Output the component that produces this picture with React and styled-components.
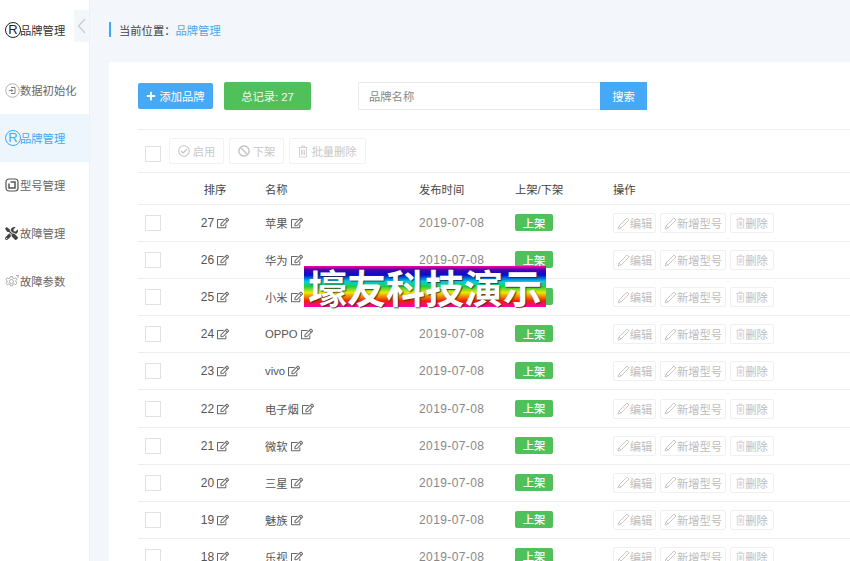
import React from "react";
import styled, { createGlobalStyle } from "styled-components";
import { FaPlus, FaRegEdit, FaRegCheckCircle, FaBan, FaTools } from "react-icons/fa";

const Global = createGlobalStyle`
  html, body { margin: 0; padding: 0; height: 561px; overflow: hidden; background: #f3f6fa; }
  * { box-sizing: border-box; }
  body { font-family: "Liberation Sans", "Noto Sans CJK SC", sans-serif; color: #555; font-size: 11.3px; }
`;

const Page = styled.div`
  display: flex; width: 850px; height: 561px; overflow: hidden; position: relative;
`;
const Sidebar = styled.aside`
  width: 90px; flex: none; background: #fff; border-right: 1px solid #eef0f3; display: flex; flex-direction: column;
`;
const Brand = styled.div`
  height: 66.5px; flex: none; display: flex; align-items: flex-start; justify-content: space-between; padding: 10px 0 0 5px; color: #333;
`;
const BrandName = styled.div`
  display: flex; align-items: center; height: 32px; padding-top: 7px;
`;
const Collapse = styled.div`
  width: 15px; height: 32px; background: #f3f6fa; display: flex; align-items: center; justify-content: center;
`;
const MenuItem = styled.div`
  height: 47.6px; flex: none; display: flex; align-items: center; padding-left: 5px;
  background: ${p => (p.$active ? "#eef6fd" : "transparent")};
  color: ${p => (p.$active ? "#3fa9f5" : "#666")};
`;
const IconSlot = styled.span`
  width: 15px; height: 16px; flex: none; display: flex; align-items: center; justify-content: flex-start;
  color: ${p => p.$color || "inherit"};
`;
const RMark = styled.span`
  width: 16px; height: 16px; flex: none; border: 1.4px solid currentColor; border-radius: 50%; display: flex; align-items: center; justify-content: center;
  font-size: 13px; line-height: 1;
`;
const Main = styled.main`
  flex: 1; min-width: 0; display: flex; flex-direction: column; padding-left: 19px;
`;
const Crumb = styled.div`
  height: 62px; flex: none; display: flex; align-items: center; padding-bottom: 3px; color: #444;
`;
const CrumbBar = styled.span`
  width: 2px; height: 15px; background: #3fa9f5; margin-right: 8px;
`;
const CrumbLink = styled.span`
  color: #4fa8ec;
`;
const Card = styled.section`
  flex: 1; background: #fff; padding: 20px 0 0 29px; min-width: 0;
`;
const Toolbar = styled.div`
  display: flex; align-items: center; height: 28px;
`;
const AddButton = styled.div`
  width: 75px; height: 26px; background: #46a9f5; color: #fff; border-radius: 2px; display: flex; align-items: center; justify-content: center; gap: 3px;
`;
const TotalBadge = styled.div`
  width: 87px; height: 28px; margin-left: 11px; background: #4fc05a; color: #f2fbf3; border-radius: 2px; display: flex; align-items: center; justify-content: center;
`;
const Search = styled.div`
  margin-left: 47px; display: flex; height: 28px;
`;
const SearchInput = styled.div`
  width: 242px; border: 1px solid #eaeaea; border-right: 0; padding-left: 10px; color: #888; display: flex; align-items: center;
`;
const SearchButton = styled.div`
  width: 47px; background: #46a9f5; color: #fff; display: flex; align-items: center; justify-content: center;
`;
const Actions = styled.div`
  margin-top: 19px; height: 44px; border-top: 1px solid #eee; border-bottom: 1px solid #eee; display: flex; align-items: flex-start; padding: 8px 0 0 7px;
`;
const Check = styled.span`
  width: 16px; height: 16px; border: 1px solid #e2e2e2; display: block; flex: none;
`;
const ActionCheck = styled(Check)`
  margin: 8px 8px 0 0;
`;
const GhostAction = styled.div`
  height: 26px; width: ${p => p.$w}px; margin-right: 5px; border: 1px solid #f2f2f2; border-radius: 2px; color: #c8c8c8;
  display: flex; align-items: center; justify-content: center; gap: 3px;
`;
const Row = styled.div`
  display: grid; grid-template-columns: 47px 60px 174px 96px 98px 1fr; align-items: center;
  height: ${p => (p.$head ? "32px" : "37.1px")};
  border-bottom: 1px solid #eee;
  color: ${p => (p.$head ? "#444" : "#555")};
`;
const CheckCell = styled.div`
  padding-left: 7px;
`;
const SortCell = styled.div`
  display: flex; align-items: center; justify-content: center; gap: 3px;
`;
const SortNumber = styled.span`
  font-size: 12px;
`;
const NameCell = styled.div`
  padding-left: 20px; display: flex; align-items: center; gap: 3px;
`;
const DateCell = styled.div`
  color: #888; font-size: 12px; letter-spacing: 0.4px;
`;
const EditIcon = styled(FaRegEdit)`
  color: #666; font-size: 12px; flex: none;
`;
const Tag = styled.span`
  width: 38px; height: 17px; margin-top: -1px; background: #4fc05a; color: #fff; border-radius: 2px; font-weight: 500; display: flex; align-items: center; justify-content: center;
`;
const Ops = styled.div`
  display: flex; gap: 4px; width: 200px;
`;
const OpButton = styled.div`
  height: 20px; width: ${p => p.$w}px; border: 1px solid #f0f0f0; border-radius: 2px; color: #bdbdbd; display: flex; align-items: center; justify-content: center; gap: 0; flex: none;
`;
const Watermark = styled.div`
  position: absolute; left: 304px; top: 266px; width: 242px; height: 41px;
  background: linear-gradient(180deg, #ff00a0 0%, #5000b0 9%, #0010d0 22%, #00d0e0 38%, #20d040 50%, #f0e800 65%, #f02000 85%, #ff00b0 100%);
  color: #fff; font-family: "Noto Sans CJK SC", sans-serif; font-weight: 700; font-size: 39px; line-height: 40px; text-align: center; white-space: nowrap;
  text-shadow: 1px 1px 1px rgba(40,40,40,.8);
`;

const rows = [
  [27, "苹果"], [26, "华为"], [25, "小米"], [24, "OPPO"], [23, "vivo"],
  [22, "电子烟"], [21, "微软"], [20, "三星"], [19, "魅族"], [18, "乐视"],
];

const InitIcon = () => (
  <svg width="15" height="15" viewBox="0 0 15 15" fill="none" stroke="currentColor" strokeWidth="0.9">
    <circle cx="7.5" cy="7.5" r="6.8" stroke="#aaa" />
    <path d="M6 4.500h4v6H6M3.800 7.500h4M6.300 6l1.500 1.500L6.300 9" stroke="#777" />
  </svg>
);
const ModelIcon = () => (
  <svg width="14" height="14" viewBox="0 0 14 14" fill="none" stroke="#555" strokeWidth="1.2">
    <rect x="1" y="1" width="12" height="12" rx="3" />
    <path d="M4 5.500V10h6V4H5.500" strokeWidth="1.500" />
  </svg>
);
const GearIcon = () => (
  <svg width="15" height="14" viewBox="0 0 15 14" fill="none" stroke="#999" strokeWidth="0.8">
    <circle cx="6.500" cy="7.500" r="2" />
    <path d="M5.500 2.500h2l.4 1.500 1.400.6 1.400-.8 1.200 1.500-1 1.200v1.400l1 1.200-1.200 1.500-1.400-.8-1.400.6-.4 1.500h-2l-.4-1.500-1.400-.6-1.400.8L1 9.500l1-1.200V6.900L1 5.300l1.200-1.500 1.400.8 1.400-.6z" />
    <path d="M11 1.500h3M12 3h2" />
  </svg>
);
const PencilIcon = () => (
  <svg width="13" height="13" viewBox="0 0 13 13" fill="none" stroke="#c4c4c4" strokeWidth="0.9">
    <path d="M1 12l1-3 8-8 2 2-8 8z" />
    <path d="M2 9l2 2" />
  </svg>
);
const TrashIcon = ({ w = 10, h = 13 }) => (
  <svg width={w} height={h} viewBox="0 0 10 13" fill="none" stroke="#c8c8c8" strokeWidth="0.8">
    <path d="M.5 2.500h9M3.500 2.500V1h3v1.500M1.500 2.500V12h7V2.500M3.500 4.500v5.500M5 4.500v5.500M6.500 4.500v5.500" />
  </svg>
);

export default function App() {
  return (
    <Page>
      <Global />
      <Sidebar>
        <Brand>
          <BrandName><IconSlot $color="#222"><RMark>R</RMark></IconSlot>品牌管理</BrandName>
          <Collapse>
            <svg width="9" height="16" viewBox="0 0 9 16" fill="none" stroke="#c5ccd4" strokeWidth="1.2"><path d="M8 1 1.500 8 8 15" /></svg>
          </Collapse>
        </Brand>
        <MenuItem><IconSlot><InitIcon /></IconSlot>数据初始化</MenuItem>
        <MenuItem $active><IconSlot><RMark>R</RMark></IconSlot>品牌管理</MenuItem>
        <MenuItem><IconSlot><ModelIcon /></IconSlot>型号管理</MenuItem>
        <MenuItem><IconSlot $color="#444"><FaTools size={13} /></IconSlot>故障管理</MenuItem>
        <MenuItem><IconSlot><GearIcon /></IconSlot>故障参数</MenuItem>
      </Sidebar>
      <Main>
        <Crumb><CrumbBar />当前位置：<CrumbLink>品牌管理</CrumbLink></Crumb>
        <Card>
          <Toolbar>
            <AddButton><FaPlus size={10} />添加品牌</AddButton>
            <TotalBadge>总记录: 27</TotalBadge>
            <Search>
              <SearchInput>品牌名称</SearchInput>
              <SearchButton>搜索</SearchButton>
            </Search>
          </Toolbar>
          <Actions>
            <ActionCheck />
            <GhostAction $w={55}><FaRegCheckCircle size={12} />启用</GhostAction>
            <GhostAction $w={55}><FaBan size={12} />下架</GhostAction>
            <GhostAction $w={77}><TrashIcon />批量删除</GhostAction>
          </Actions>
          <Row $head>
            <div />
            <SortCell>排序</SortCell>
            <NameCell>名称</NameCell>
            <div>发布时间</div>
            <div>上架/下架</div>
            <div>操作</div>
          </Row>
          {rows.map(([n, name]) => (
            <Row key={n}>
              <CheckCell><Check /></CheckCell>
              <SortCell><SortNumber>{n}</SortNumber><EditIcon /></SortCell>
              <NameCell>{name}<EditIcon /></NameCell>
              <DateCell>2019-07-08</DateCell>
              <div><Tag>上架</Tag></div>
              <Ops>
                <OpButton $w={43}><PencilIcon />编辑</OpButton>
                <OpButton $w={66}><PencilIcon />新增型号</OpButton>
                <OpButton $w={44}><TrashIcon w={9} h={12} />删除</OpButton>
              </Ops>
            </Row>
          ))}
        </Card>
      </Main>
      <Watermark>壕友科技演示</Watermark>
    </Page>
  );
}
